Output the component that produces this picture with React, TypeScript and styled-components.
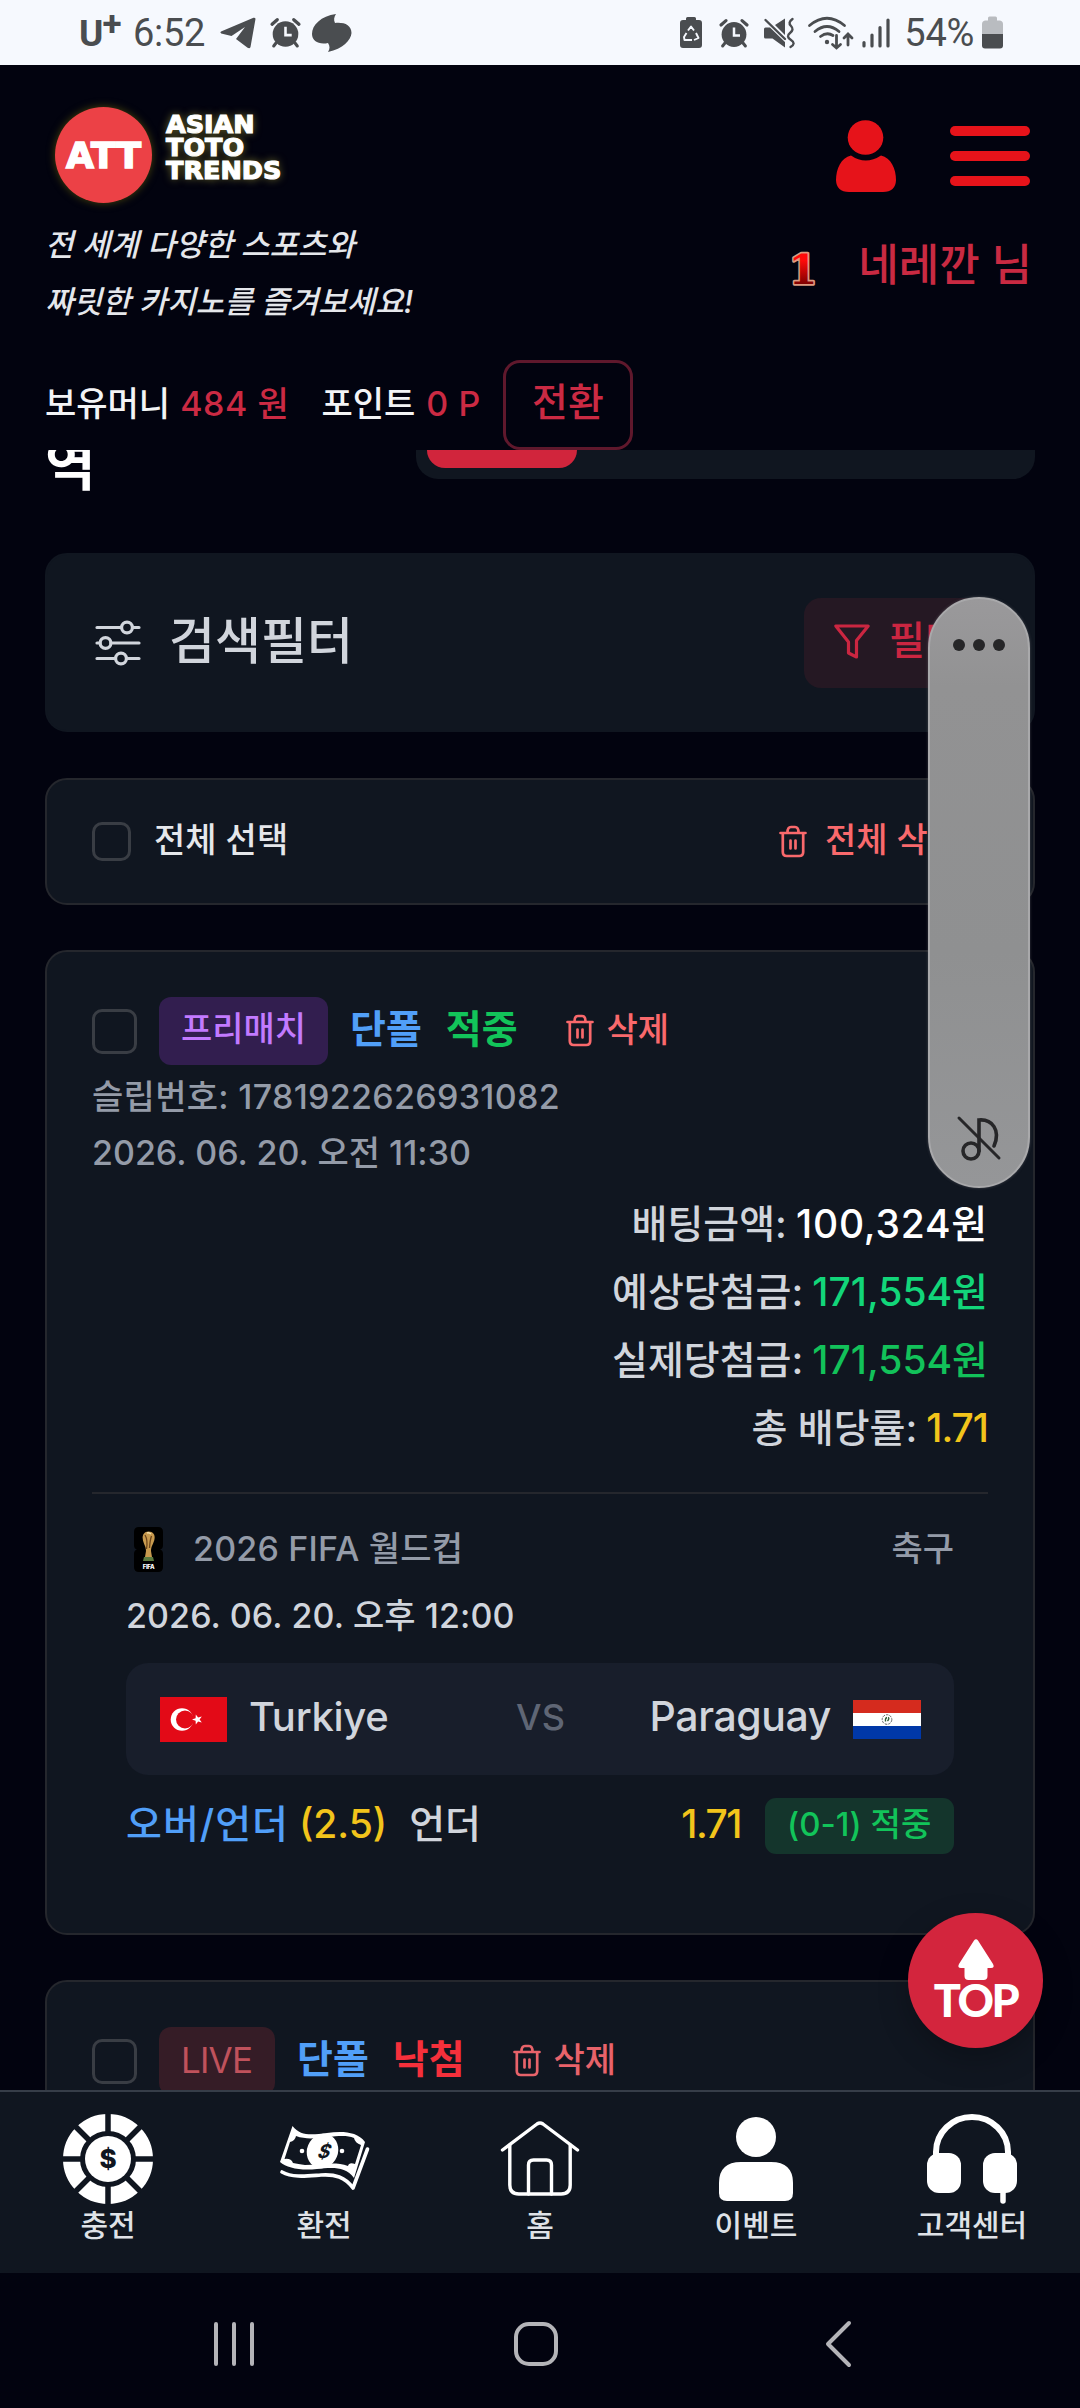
import React from "react";
import styled, { createGlobalStyle } from "styled-components";

const ink = "#02030f";
const panel = "#101620";
const line = "#25272d";
const grey = "#4a4d50";

const Global = createGlobalStyle`
  * { box-sizing: border-box; }
  body { margin: 0; background: ${ink}; }
  svg { display: block; flex: none; overflow: visible; }
`;

const Screen = styled.div`
  position: relative;
  width: 1080px;
  height: 2408px;
  overflow: hidden;
  display: flex;
  flex-direction: column;
  background: ${ink};
  font-family: Inter, "Noto Sans CJK KR", sans-serif;
  white-space: nowrap;
`;

type TextProps = { $s: number; $c?: string; $w?: number; $ls?: number; $ml?: number; $up?: number };
const Text = styled.span<TextProps>`
  font-size: ${(p) => p.$s}px;
  line-height: 1.2;
  font-weight: ${(p) => p.$w ?? 500};
  color: ${(p) => p.$c ?? "#d1d5dc"};
  letter-spacing: ${(p) => p.$ls ?? 0}px;
  margin-left: ${(p) => p.$ml ?? 0}px;
  padding-bottom: ${(p) => p.$up ?? 0}px;
`;

/* ---------- status bar ---------- */
const StatusBar = styled.div`
  height: 65px;
  flex: none;
  padding: 0 77px 0 79px;
  display: flex;
  align-items: center;
  justify-content: space-between;
  background: #f6f9fe;
`;
const StatusGroup = styled.div`
  display: flex;
  align-items: center;
`;
const StatusItem = styled.div<{ $ml: number }>`
  display: flex;
  margin-left: ${(p) => p.$ml}px;
`;
const Carrier = styled.span`
  font: 700 37px/40px Roboto, sans-serif;
  color: ${grey};
  display: flex;
  width: 41px;
  padding-top: 2px;
  sup { font-size: 35px; line-height: 22px; margin-left: -1px; }
`;
const Clock = styled.span`
  font: 400 38px/44px Roboto, sans-serif;
  color: ${grey};
  letter-spacing: -0.3px;
`;

const AlarmIcon = ({ size }: { size: number }) => (
  <svg width={size} height={size} viewBox="0 0 30 30">
    <circle cx="15" cy="16.5" r="12.4" fill={grey} />
    <path d="M2 7 L7 2.6 M28 7 L23 2.6" stroke={grey} strokeWidth="3.2" strokeLinecap="round" />
    <path d="M6 25 L3.6 28 M24 25 L26.4 28" stroke={grey} strokeWidth="3" strokeLinecap="round" />
    <path d="M15 9.5 V17.5 H21" stroke="#f6f9fe" strokeWidth="2.5" fill="none" />
  </svg>
);
const TelegramIcon = () => (
  <svg width="36" height="32" viewBox="0 0 36 32">
    <path d="M1 14.5 L33.5 .8 Q35.8 .2 35.4 2.6 L30.5 30 Q29.8 32 27.6 30.8 L16 22 L25 10 L11.5 19 L1.2 16.4 Q-.4 15.5 1 14.5Z" fill={grey} />
  </svg>
);
const BlobIcon = () => (
  <svg width="40" height="38" viewBox="0 0 40 38">
    <path d="M24 0 C9 2 0 11 0 20 C0 27 7 31 16 29 C18 32 18 35 16 38 C31 35 39 26 39.500 19 C39.500 11 32 8 23 9 C21.500 6 22 3 24 0Z" fill={grey} />
  </svg>
);
const RecycleBatteryIcon = () => (
  <svg width="22" height="33" viewBox="0 0 22 33">
    <path d="M6 4 V2.500 Q6 1 7.500 1 H14.500 Q16 1 16 2.500 V4 H19 Q22 4 22 7 V29 Q22 32 19 32 H3 Q0 32 0 29 V7 Q0 4 3 4Z" fill={grey} />
    <path d="M8 14.500 L11 10.500 L14 14.500 M16 17 L18.500 22 L14 24 M12 24 H4.500 L4 21 L6.500 17" stroke="#f6f9fe" strokeWidth="1.900" fill="none" strokeLinejoin="round" />
  </svg>
);
const MuteIcon = () => (
  <svg width="31" height="30" viewBox="0 0 31 30">
    <path d="M0 11 Q0 9.500 1.500 9.500 H6 L21 24 V29.500 L8.500 20.500 H1.500 Q0 20.500 0 19Z M11 7 L21 .5 V17Z" fill={grey} />
    <path d="M1.500 2 L21 21" stroke={grey} strokeWidth="2.400" strokeLinecap="round" />
    <path d="M28.500 1 q-5 3.500 -1.500 7 t-1 7 t1 7 t-.5 7" stroke={grey} strokeWidth="2.400" fill="none" strokeLinecap="round" />
  </svg>
);
const WifiIcon = () => (
  <svg width="46" height="34" viewBox="0 0 46 34">
    <g stroke={grey} strokeWidth="2.800" fill="none" strokeLinecap="round">
      <path d="M1.500 9.500 Q19 -5 36.500 9.500" />
      <path d="M7 15.500 Q19 5.500 31 15.500" />
      <path d="M12.500 20.500 Q19 15.500 25 19.500" />
      <path d="M28.500 19.500 V32 M24.500 28.500 L28.500 32 L32.500 28.500" />
      <path d="M40 29 V18.500 M36 22 L40 18 L44 22" />
    </g>
    <circle cx="19" cy="26" r="2.200" fill={grey} />
  </svg>
);
const SignalIcon = () => (
  <svg width="28" height="30" viewBox="0 0 28 30">
    <path d="M2 24.500 V28 M10 17 V28 M18 9.500 V28 M26 2 V28" stroke={grey} strokeWidth="3.200" strokeLinecap="round" />
  </svg>
);
const BatteryIcon = () => (
  <svg width="21" height="33" viewBox="0 0 21 33">
    <path d="M6 4.500 V2 Q6 .5 7.500 .5 H13.500 Q15 .5 15 2 V4.500 H18 Q21 5 21 8 V18 H0 V8 Q0 5 3 4.500Z" fill="#b9bcc0" />
    <path d="M0 18 H21 V29.500 Q21 32.500 18 32.500 H3 Q0 32.500 0 29.500Z" fill={grey} />
  </svg>
);

/* ---------- header ---------- */
const Header = styled.header`
  height: 385px;
  flex: none;
  padding: 42px 48px 0 45px;
  background: ${ink};
`;
const HeaderMain = styled.div`
  height: 223px;
  display: flex;
  justify-content: space-between;
`;
const Brand = styled.div`
  display: flex;
  flex-direction: column;
`;
const Logo = styled.div`
  height: 96px;
  margin: 0 0 13px 10px;
  display: flex;
  align-items: flex-start;
  font-family: "DejaVu Sans", sans-serif;
  font-weight: 700;
  color: #fff;
`;
const LogoDisc = styled.div`
  width: 97px;
  height: 96px;
  border-radius: 50%;
  background: #ec4146;
  box-shadow: 0 0 8px rgba(130, 120, 10, 0.55);
  display: flex;
  align-items: center;
  justify-content: center;
  font-size: 36px;
  -webkit-text-stroke: 1.6px #fff;
`;
const LogoWords = styled.div`
  margin: 6px 0 0 14px;
  display: flex;
  flex-direction: column;
  font-size: 25.5px;
  line-height: 23px;
  -webkit-text-stroke: 1.2px #fff;
  text-shadow: 0 0 8px rgba(190, 180, 60, 0.7);
`;
const Slogan = styled.span`
  height: 57px;
  line-height: 57px;
  font-size: 31px;
  font-style: italic;
  font-weight: 500;
  color: #e5e7eb;
`;
const Account = styled.div`
  padding-top: 13px;
  display: flex;
  flex-direction: column;
  align-items: flex-end;
`;
const AccountIcons = styled.div`
  height: 72px;
  display: flex;
  align-items: flex-start;
  gap: 54px;
  padding-right: 2px;
`;
const Member = styled.div`
  display: flex;
  align-items: center;
  height: 60px;
  margin-top: 44px;
`;
const Burger = styled.div`
  width: 80px;
  height: 60px;
  margin-top: 6px;
  display: flex;
  flex-direction: column;
  justify-content: space-between;
`;
const BurgerBar = styled.i`
  height: 10px;
  border-radius: 5px;
  background: #e6131a;
`;
const Balance = styled.div`
  height: 90px;
  margin-top: 30px;
  display: flex;
  align-items: center;
`;
const Exchange = styled.button`
  margin: 0 0 0 22px;
  padding: 0 0 5px;
  width: 130px;
  height: 90px;
  border: 3px solid #5f182c;
  border-radius: 17px;
  background: transparent;
  font-family: inherit;
`;

/* ---------- content ---------- */
const Content = styled.main`
  flex: 1;
  min-height: 0;
  overflow: hidden;
  padding: 0 45px;
  display: flex;
  flex-direction: column;
`;
const TitleRow = styled.div`
  height: 103px;
  flex: none;
  display: flex;
  align-items: flex-start;
  justify-content: space-between;
`;
const Title = styled.h1`
  margin: -20px 0 0;
  font-size: 55px;
  line-height: 70px;
  font-weight: 700;
  color: #fff;
`;
const Segments = styled.div`
  width: 619px;
  height: 100px;
  margin-top: -71px;
  padding: 11px;
  border-radius: 22px;
  background: ${panel};
`;
const SegmentOn = styled.div`
  width: 150px;
  height: 78px;
  border-radius: 18px;
  background: #d1253c;
`;
const Card = styled.section<{ $h: number; $mt?: number; $b?: boolean }>`
  height: ${(p) => p.$h}px;
  flex: none;
  margin-top: ${(p) => p.$mt ?? 0}px;
  border: 2px solid ${(p) => (p.$b ? line : panel)};
  border-radius: 22px;
  background: ${panel};
  padding: 0 45px;
`;
const CardRow = styled.div<{ $pl?: number }>`
  height: 100%;
  padding-left: ${(p) => p.$pl ?? 0}px;
  display: flex;
  align-items: center;
`;
const Grow = styled.i`
  flex: 1;
`;
const FilterButton = styled.div`
  width: 184px;
  height: 90px;
  padding: 0 0 3px 30px;
  border-radius: 17px;
  background: #251823;
  display: flex;
  align-items: center;
`;
const DeleteAll = styled.div`
  width: 209px;
  display: flex;
  align-items: center;
`;
const Check = styled.i<{ $s: number }>`
  width: ${(p) => p.$s}px;
  height: ${(p) => p.$s}px;
  border: 3px solid #393d44;
  border-radius: 10px;
`;
const SlipHead = styled.div`
  height: 68px;
  margin-top: 45px;
  display: flex;
  align-items: center;
`;
const SlipDelete = styled.div`
  margin-left: 48px;
  display: flex;
  align-items: center;
  gap: 13px;
`;
const Kind = styled.div<{ $bg: string; $w: number }>`
  margin-left: 22px;
  width: ${(p) => p.$w}px;
  height: 68px;
  border-radius: 12px;
  background: ${(p) => p.$bg};
  padding: 0 0 3px 22px;
  display: flex;
  align-items: center;
`;
const SlipMeta = styled.div`
  margin-top: 4px;
  display: flex;
  flex-direction: column;
`;
const MetaLine = styled.div`
  height: 56px;
  display: flex;
  align-items: center;
`;
const Sums = styled.div`
  margin-top: 9px;
  padding-bottom: 30px;
  border-bottom: 2px solid ${line};
`;
const SumLine = styled.div`
  height: 68px;
  display: flex;
  align-items: center;
  justify-content: flex-end;
`;
const Bet = styled.div`
  padding: 0 34px;
`;
const League = styled.div`
  height: 56px;
  margin: 27px 0 14px;
  padding-left: 8px;
  display: flex;
  align-items: center;
`;
const Kickoff = styled.div`
  height: 50px;
  display: flex;
  align-items: center;
`;
const Match = styled.div`
  height: 112px;
  margin: 22px 0 23px;
  padding: 0 33px 0 34px;
  border-radius: 22px;
  background: #181e2b;
  display: grid;
  grid-template-columns: 1fr auto 1fr;
  align-items: center;
`;
const Team = styled.div<{ $end?: boolean }>`
  display: flex;
  align-items: center;
  gap: 22px;
  justify-content: ${(p) => (p.$end ? "flex-end" : "flex-start")};
`;
const Pick = styled.div`
  height: 56px;
  display: flex;
  align-items: center;
`;
const Result = styled.div`
  margin-left: 24px;
  width: 189px;
  height: 56px;
  border-radius: 11px;
  background: #14352c;
  padding: 0 0 3px 22px;
  display: flex;
  align-items: center;
`;

const SlidersIcon = () => (
  <svg width="46" height="46" viewBox="0 0 46 46" fill="none" stroke="#d1d5dc" strokeWidth="3.200" strokeLinecap="round">
    <path d="M2 7.500 H26 M38 7.500 H44 M2 23 H5 M16 23 H44 M2 38.500 H20 M32 38.500 H44" />
    <circle cx="32" cy="7.500" r="5.400" />
    <circle cx="10.500" cy="23" r="5.400" />
    <circle cx="26" cy="38.500" r="5.400" />
  </svg>
);
const FunnelIcon = () => (
  <svg width="36" height="36" viewBox="0 0 36 36" fill="none" stroke="#cb2641" strokeWidth="3.200" strokeLinejoin="round">
    <path d="M1.800 3 H34.200 L22.500 17.500 V34 L14.500 30 V19 Z" />
  </svg>
);
const TrashIcon = ({ c = "#f9696c" }: { c?: string }) => (
  <svg width="28" height="33" viewBox="0 0 28 33" fill="none" stroke={c} strokeWidth="2.700" strokeLinecap="round" strokeLinejoin="round">
    <path d="M1.500 8 H26.500 M3.800 8 V27 Q3.800 31 7.800 31 H20.200 Q24.200 31 24.200 27 V8 M8.500 7.500 Q8.500 2 12 2 H16 Q19.500 2 19.500 7.500 M11.500 15.500 V23.500 M16.500 15.500 V23.500" />
  </svg>
);
const MemberIcon = () => (
  <svg width="60" height="72" viewBox="0 0 60 74" preserveAspectRatio="none" fill="#e6131a">
    <circle cx="29.500" cy="18" r="17.800" />
    <path d="M15 36.500 Q29.500 47 45 36.500 C55 39 60 50 60 62 Q59.500 74 47 74 H13 Q.5 74 0 62 C0 50 5 39 15 36.500Z" />
  </svg>
);
const RankIcon = () => (
  <svg width="34" height="48" viewBox="0 0 34 48">
    <defs>
      <linearGradient id="rank" x1="0" y1="0" x2="0" y2="1">
        <stop offset="0.3" stopColor="#ff0a0a" />
        <stop offset="0.8" stopColor="#7d0000" />
      </linearGradient>
    </defs>
    <text x="17" y="42" textAnchor="middle" fontFamily="DejaVu Serif, serif" fontWeight="700" fontSize="41" fill="url(#rank)" stroke="#dc9a80" strokeWidth="3.4" strokeLinejoin="round" paintOrder="stroke">1</text>
  </svg>
);
const TrophyIcon = () => (
  <svg width="29" height="45" viewBox="0 0 29 45">
    <path d="M5 0 H24 Q29 0 29 5 V18 Q29 22 26 22.500 Q29 23 29 27 V40 Q29 45 24 45 H5 Q0 45 0 40 V27 Q0 23 3 22.500 Q0 22 0 18 V5 Q0 0 5 0Z" fill="#000" />
    <path d="M14.500 4.500 C19 4.500 21.500 8 20.500 12 C20 16 17 19 17 24 L18 30 H11 L12 24 C12 19 9 16 8.800 12 C8 8 10.500 4.500 14.500 4.500Z" fill="#c89a4e" />
    <path d="M11 8 Q14 13 12.500 22 M17.500 9 Q16 13 15.500 21" stroke="#6d451b" strokeWidth="1.300" fill="none" />
    <path d="M13 6 Q15 5 17 7" stroke="#f5e0a8" strokeWidth="1.500" fill="none" />
    <path d="M10 30 H19 L20 34 H9Z" fill="#5b7a3f" />
    <text x="14.500" y="41.500" textAnchor="middle" fontSize="6" fontWeight="800" fill="#fff" fontFamily="Inter, sans-serif" letterSpacing="-0.3">FIFA</text>
  </svg>
);
const TurkeyFlag = () => (
  <svg width="67" height="45" viewBox="0 0 67 45">
    <rect width="67" height="45" fill="#e30a17" />
    <circle cx="22" cy="22.500" r="11.300" fill="#fff" />
    <circle cx="25" cy="22.500" r="9" fill="#e30a17" />
    <polygon points="32,22.500 35.600,21.300 35.800,17.600 38.100,20.500 41.800,19.500 39.600,22.500 41.800,25.500 38.100,24.500 35.800,27.400 35.600,23.700" fill="#fff" />
  </svg>
);
const ParaguayFlag = () => (
  <svg width="68" height="39" viewBox="0 0 68 39">
    <rect width="68" height="13" fill="#d52b1e" />
    <rect y="13" width="68" height="13" fill="#fff" />
    <rect y="26" width="68" height="13" fill="#0038a8" />
    <circle cx="34" cy="19.500" r="4.800" fill="none" stroke="#555" strokeWidth="0.900" strokeDasharray="2.500 1" />
    <path d="M32.500 21.500 Q32 18 34 17.500 M35 17.500 Q37 18 34.500 21" stroke="#2f5d34" strokeWidth="1.300" fill="none" />
  </svg>
);

/* ---------- bottom bars ---------- */
const TabBar = styled.nav`
  height: 183px;
  flex: none;
  border-top: 2px solid #363d48;
  background: ${panel};
  display: grid;
  grid-template-columns: repeat(5, 1fr);
`;
const Tab = styled.div`
  padding-top: 22px;
  display: flex;
  flex-direction: column;
  align-items: center;
`;
const TabIcon = styled.div`
  height: 90px;
  margin-bottom: 3px;
  display: flex;
  align-items: center;
`;
const SystemBar = styled.div`
  height: 135px;
  flex: none;
  padding: 7px 0 0 213px;
  display: grid;
  grid-template-columns: 300px 312px auto;
  align-items: center;
`;

const ChipIcon = () => (
  <svg width="90" height="90" viewBox="0 0 90 90">
    <circle cx="45" cy="45" r="36.500" fill="none" stroke="#fff" strokeWidth="17" />
    <path d="M45 0 V20 M45 70 V90 M0 45 H20 M70 45 H90 M12 12 L28 28 M62 62 L78 78 M78 12 L62 28 M12 78 L28 62" stroke={panel} strokeWidth="5.500" />
    <circle cx="45" cy="45" r="23" fill="#fff" />
    <text x="45" y="54" textAnchor="middle" fontSize="26" fontWeight="800" fontFamily="Inter, sans-serif" fill={panel}>$</text>
  </svg>
);
const BillsIcon = () => (
  <svg width="90" height="68" viewBox="0 0 90 68">
    <path d="M13.500 1 C22 12 34 9.500 48 8 C62 6 78 6 86 17 L75 53 C66 40 50 43 38 44 C22 46 8 43 1 37 Z" fill="#fff" />
    <path d="M17 11 C28 15 38 13 48 12 C60 11 68 10 75 13 Q76 18 82 20 L76 39 Q70 37 69 41 C56 36 40 40 26 40 Q19 39 14 38 Q12 33 5.500 34 L11 17 Q16 16 17 11Z" fill={panel} />
    <ellipse cx="43.500" cy="26" rx="15.500" ry="17.500" transform="rotate(22 43.500 26)" fill="#fff" />
    <g transform="translate(42.500 33) skewX(-20)">
      <text x="1" y="0" textAnchor="middle" fontSize="19" fontWeight="700" fontFamily="Inter, sans-serif" fill={panel}>$</text>
    </g>
    <circle cx="23" cy="26" r="2.300" fill="#fff" />
    <circle cx="63" cy="26" r="2.300" fill="#fff" />
    <path d="M3 47 C14 53 28 51 42 50 C56 49 66 52 74 63 L88.500 24" fill="none" stroke="#fff" strokeWidth="3.600" strokeLinejoin="round" strokeLinecap="round" />
  </svg>
);
const HomeIcon = () => (
  <svg width="80" height="76" viewBox="0 0 80 76" fill="none" stroke="#fff" strokeWidth="3.400" strokeLinecap="round" strokeLinejoin="round">
    <path d="M2.500 29 L37 3 Q40 1 43 3 L77.500 29" />
    <path d="M9.800 24 V64 Q9.800 73 18.800 73 H61.200 Q70.200 73 70.200 64 V24" />
    <path d="M28.500 73 V44 Q28.500 39 33.500 39 H46.500 Q51.500 39 51.500 44 V73" />
  </svg>
);
const EventIcon = () => (
  <svg width="74" height="84" viewBox="0 0 74 84" fill="#fff">
    <circle cx="37" cy="20" r="20" />
    <path d="M0 66 Q0 45 22 45 H52 Q74 45 74 66 V76 Q74 84 66 84 H8 Q0 84 0 76Z" />
  </svg>
);
const SupportIcon = () => (
  <svg width="90" height="90" viewBox="0 0 90 90" fill="#fff">
    <path d="M9 42 V38 A36 35 0 0 1 81 38 V42" fill="none" stroke="#fff" strokeWidth="6" />
    <rect x="0" y="39" width="34" height="40" rx="12" />
    <rect x="56" y="39" width="34" height="40" rx="12" />
    <path d="M76 76 V87" stroke="#fff" strokeWidth="5.500" strokeLinecap="round" />
  </svg>
);

/* ---------- floating pieces ---------- */
const VolumePanel = styled.aside`
  position: absolute;
  left: 928px;
  top: 597px;
  width: 102px;
  height: 591px;
  padding: 40px 0 25px;
  border: 2px solid #a9a9ab;
  border-radius: 51px;
  background: linear-gradient(#9a999b, #929293 15%, #8f9091 60%, #959698);
  box-shadow: 0 0 3px rgba(120, 120, 125, 0.5);
  display: flex;
  flex-direction: column;
  align-items: center;
  justify-content: space-between;
`;
const Dots = styled.div`
  display: flex;
  gap: 8px;
  i { width: 12px; height: 12px; border-radius: 50%; background: #262628; }
`;
const TopButton = styled.button`
  position: absolute;
  left: 908px;
  top: 1913px;
  width: 135px;
  height: 135px;
  padding: 26px 0 0;
  border: 0;
  border-radius: 50%;
  background: #d3253d;
  box-shadow: 0 10px 30px rgba(0, 0, 0, 0.25);
  display: flex;
  flex-direction: column;
  align-items: center;
  color: #fff;
  font: 900 45px/39px Lato, sans-serif;
  letter-spacing: -2.5px;
`;

const sums = [
  { label: "배팅금액:", value: "100,324원", color: "#ffffff", ls: 0.8 },
  { label: "예상당첨금:", value: "171,554원", color: "#12d67a", ls: 0 },
  { label: "실제당첨금:", value: "171,554원", color: "#12c25a", ls: 0 },
  { label: "총 배당률:", value: "1.71", color: "#f2c41b", ls: -1 },
];
const tabs = [
  { label: "충전", icon: <ChipIcon /> },
  { label: "환전", icon: <BillsIcon /> },
  { label: "홈", icon: <HomeIcon /> },
  { label: "이벤트", icon: <EventIcon /> },
  { label: "고객센터", icon: <SupportIcon /> },
];

export default function App() {
  return (
    <>
      <Global />
      <Screen>
        <StatusBar>
          <StatusGroup>
            <Carrier>U<sup>+</sup></Carrier>
            <StatusItem $ml={13}><Clock>6:52</Clock></StatusItem>
            <StatusItem $ml={15}><TelegramIcon /></StatusItem>
            <StatusItem $ml={14}><AlarmIcon size={31} /></StatusItem>
            <StatusItem $ml={11}><BlobIcon /></StatusItem>
          </StatusGroup>
          <StatusGroup>
            <RecycleBatteryIcon />
            <StatusItem $ml={17}><AlarmIcon size={30} /></StatusItem>
            <StatusItem $ml={15}><MuteIcon /></StatusItem>
            <StatusItem $ml={13}><WifiIcon /></StatusItem>
            <StatusItem $ml={8}><SignalIcon /></StatusItem>
            <StatusItem $ml={14}><Clock>54%</Clock></StatusItem>
            <StatusItem $ml={8}><BatteryIcon /></StatusItem>
          </StatusGroup>
        </StatusBar>

        <Header>
          <HeaderMain>
            <Brand>
              <Logo>
                <LogoDisc>ATT</LogoDisc>
                <LogoWords>
                  <span>ASIAN</span>
                  <span>TOTO</span>
                  <span>TRENDS</span>
                </LogoWords>
              </Logo>
              <Slogan>전 세계 다양한 스포츠와</Slogan>
              <Slogan>짜릿한 카지노를 즐겨보세요!</Slogan>
            </Brand>
            <Account>
              <AccountIcons>
                <MemberIcon />
                <Burger>
                  <BurgerBar />
                  <BurgerBar />
                  <BurgerBar />
                </Burger>
              </AccountIcons>
              <Member>
                <RankIcon />
                <Text $s={44} $c="#c92a42" $ml={38} $up={2}>네레깐 님</Text>
              </Member>
            </Account>
          </HeaderMain>
          <Balance>
            <Text $s={34} $c="#f3f4f6" $up={2}>보유머니</Text>
            <Text $s={34} $c="#cb2a43" $ls={0.6} $ml={10} $up={2}>484 원</Text>
            <Text $s={34} $c="#f3f4f6" $ml={32} $up={2}>포인트</Text>
            <Text $s={34} $c="#cb2a43" $ls={0.6} $ml={11} $up={2}>0 P</Text>
            <Exchange><Text $s={39} $c="#cb2a43">전환</Text></Exchange>
          </Balance>
        </Header>

        <Content>
          <TitleRow>
            <Title>역</Title>
            <Segments><SegmentOn /></Segments>
          </TitleRow>

          <Card $h={179}>
            <CardRow $pl={3}>
              <SlidersIcon />
              <Text $s={50} $ml={28} $up={3}>검색필터</Text>
              <Grow />
              <FilterButton>
                <FunnelIcon />
                <Text $s={39} $c="#cb2641" $ml={19} $up={2}>필터</Text>
              </FilterButton>
            </CardRow>
          </Card>

          <Card $h={127} $mt={46} $b>
            <CardRow>
              <Check $s={39} />
              <Text $s={34} $c="#e5e7eb" $ml={23} $up={3}>전체 선택</Text>
              <Grow />
              <DeleteAll>
                <TrashIcon />
                <Text $s={34} $c="#f9696c" $ml={18} $up={3}>전체 삭제</Text>
              </DeleteAll>
            </CardRow>
          </Card>

          <Card $h={985} $mt={45} $b>
            <SlipHead>
              <Check $s={45} />
              <Kind $bg="#321e4f" $w={169}><Text $s={34} $c="#c27aff">프리매치</Text></Kind>
              <Text $s={39} $w={600} $c="#519ff8" $ml={22} $up={4}>단폴</Text>
              <Text $s={39} $w={600} $c="#12c45a" $ml={24} $up={4}>적중</Text>
              <SlipDelete>
                <TrashIcon />
                <Text $s={34} $c="#f9696c" $up={2}>삭제</Text>
              </SlipDelete>
            </SlipHead>
            <SlipMeta>
              <MetaLine><Text $s={34} $c="#949ba8" $ls={0.3}>슬립번호: 1781922626931082</Text></MetaLine>
              <MetaLine><Text $s={34} $c="#949ba8">2026. 06. 20. 오전 11:30</Text></MetaLine>
            </SlipMeta>
            <Sums>
              {sums.map((s) => (
                <SumLine key={s.label}>
                  <Text $s={39}>{s.label}</Text>
                  <Text $s={39} $c={s.color} $ml={9} $ls={s.ls}>{s.value}</Text>
                </SumLine>
              ))}
            </Sums>
            <Bet>
              <League>
                <TrophyIcon />
                <Text $s={34} $c="#949ba8" $ml={30} $ls={0.2}>2026 FIFA 월드컵</Text>
                <Grow />
                <Text $s={34} $c="#949ba8">축구</Text>
              </League>
              <Kickoff><Text $s={34} $ls={0.1}>2026. 06. 20. 오후 12:00</Text></Kickoff>
              <Match>
                <Team>
                  <TurkeyFlag />
                  <Text $s={40} $up={4} $ls={-0.3}>Turkiye</Text>
                </Team>
                <Text $s={36} $c="#5f6675" $up={3}>VS</Text>
                <Team $end>
                  <Text $s={41} $up={4} $ls={-0.4}>Paraguay</Text>
                  <ParaguayFlag />
                </Team>
              </Match>
              <Pick>
                <Text $s={39} $c="#519ff8" $ls={1} $up={4}>오버/언더</Text>
                <Text $s={39} $c="#f2c41b" $ml={10} $up={4}>(2.5)</Text>
                <Text $s={39} $ml={22} $up={4}>언더</Text>
                <Grow />
                <Text $s={39} $c="#f2c41b" $ls={-1.5} $up={4}>1.71</Text>
                <Result><Text $s={33} $c="#12c45a">(0-1) 적중</Text></Result>
              </Pick>
            </Bet>
          </Card>

          <Card $h={300} $mt={45} $b>
            <SlipHead>
              <Check $s={45} />
              <Kind $bg="#351c26" $w={116}><Text $s={35} $w={400} $ls={-0.8} $c="#c0525c">LIVE</Text></Kind>
              <Text $s={39} $w={600} $c="#519ff8" $ml={22} $up={4}>단폴</Text>
              <Text $s={39} $w={600} $c="#f5303b" $ml={24} $up={4}>낙첨</Text>
              <SlipDelete>
                <TrashIcon c="#e8636a" />
                <Text $s={34} $c="#e8636a" $up={2}>삭제</Text>
              </SlipDelete>
            </SlipHead>
          </Card>
        </Content>

        <TabBar>
          {tabs.map((t) => (
            <Tab key={t.label}>
              <TabIcon>{t.icon}</TabIcon>
              <Text $s={30} $c="#dfe2e7">{t.label}</Text>
            </Tab>
          ))}
        </TabBar>

        <SystemBar>
          <svg width="42" height="46" viewBox="0 0 42 46"><path d="M3 3 V43 M21 3 V43 M39 3 V43" stroke="#b4b4b8" strokeWidth="4" strokeLinecap="round" /></svg>
          <svg width="46" height="46" viewBox="0 0 46 46"><rect x="3" y="3" width="40" height="40" rx="13" fill="none" stroke="#b4b4b8" strokeWidth="4" /></svg>
          <svg width="28" height="48" viewBox="0 0 28 48"><path d="M24 3 L3 24 L24 45" fill="none" stroke="#b4b4b8" strokeWidth="4" strokeLinecap="round" strokeLinejoin="round" /></svg>
        </SystemBar>

        <VolumePanel>
          <Dots><i /><i /><i /></Dots>
          <svg width="46" height="46" viewBox="0 0 46 46" fill="none" stroke="#262628" strokeWidth="3.600" strokeLinecap="round">
            <path d="M3 3 L43 43" strokeWidth="3" />
            <circle cx="15" cy="36" r="8" />
            <path d="M23 36 V5 C36 4 45 15 38 31" />
          </svg>
        </VolumePanel>

        <TopButton>
          <svg width="36" height="42" viewBox="0 0 36 42"><path d="M16 1.500 Q18 -1 20 1.500 L35 25 Q37 29 33 29 H29.500 V37 Q29.500 41 25.500 41 H10.500 Q6.500 41 6.500 37 V29 H3 Q-1 29 1 25Z" fill="#fff" /></svg>
          TOP
        </TopButton>
      </Screen>
    </>
  );
}
